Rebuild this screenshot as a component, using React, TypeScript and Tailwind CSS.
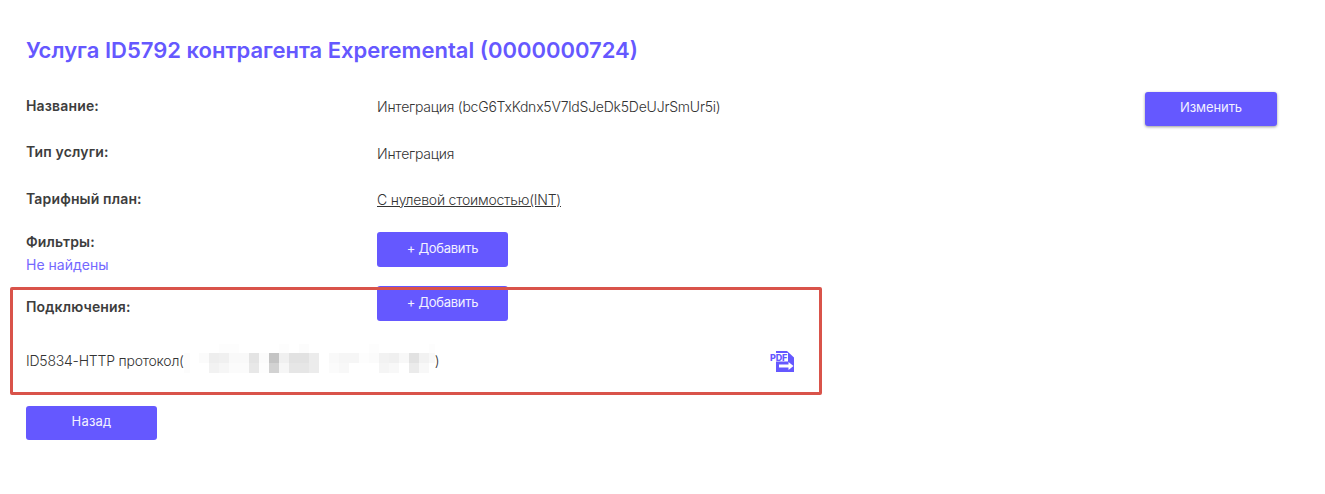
const font = "[font-family:Inter,'Noto_Sans',sans-serif]";

// blurred-out mosaic over the connection address, one row of 10px cells per line
const mosaic = [
  { y: 1, cells: ["#fff", "#fff", "#fdfdfd", "#fdfdfd", "#fff", "#fff", "#fff", "#fff", "#fdfdfd", "#fff", "#fcfcfc", "#fff", "#fff", "#fff", "#fff", "#fff", "#fff", "#fdfdfd", "#fff", "#fff", "#fff", "#fff", "#fff", "#fdfdfd"] },
  { y: 10, cells: ["#fbfbfb", "#eeeeee", "#f0f0f0", "#f9f9f9", "#f9f9f9", "#e4e4e4", "#fbfbfb", "#c4c4c4", "#f0f0f0", "#e2e2e2", "#e2e2e2", "#ececec", "#fff", "#f9f9f9", "#f6f6f6", "#f6f6f6", "#fdfdfd", "#fbfbfb", "#f2f2f2", "#f0f0f0", "#f8f8f8", "#e2e2e2", "#f2f2f2", "#f8f8f8"] },
  { y: 20, cells: ["#fff", "#f2f2f2", "#f6f6f6", "#fbfbfb", "#fbfbfb", "#e8e8e8", "#fdfdfd", "#d2d2d2", "#f6f6f6", "#e6e6e6", "#e6e6e6", "#ececec", "#fff", "#fbfbfb", "#f8f8f8", "#fff", "#fff", "#fff", "#f5f5f5", "#f8f8f8", "#fff", "#ebebeb", "#f8f8f8", "#fff"] },
];

function Blur() {
  return (
    <svg width="251" height="36" viewBox="0 0 251 36" className="shrink-0 -my-[8px]">
      <rect x="0" y="10" width="6" height="20" fill="#fcfcfc" />
      {mosaic.map((row) =>
        row.cells.map((c, i) => (
          <rect key={`${row.y}-${i}`} x={15 + i * 10} y={row.y} width="10" height="10" fill={c} />
        ))
      )}
    </svg>
  );
}

function PdfIcon() {
  return (
    <svg width="25" height="21" viewBox="0 0 25 21" className="shrink-0">
      <path d="M6 0h11l7 6.5V21H6z" fill="#6558ff" />
      <rect x="0" y="2" width="18" height="8.5" fill="#fff" />
      <text x="0" y="9.5" fontSize="9" fontWeight="800" letterSpacing="-0.2" fontFamily="Inter, sans-serif" fill="#6558ff">
        PDF
      </text>
      <path d="M9 13.5h9.5V11l5 4-5 4v-2.5H9z" fill="#fff" />
    </svg>
  );
}

function Button({ children, className = "" }: { children: React.ReactNode; className?: string }) {
  return (
    <button className={`w-[131px] h-[34px] pb-[2px] rounded-[3px] bg-[#6558ff] text-[#f2f1ff] text-[13px] font-normal ${className}`}>
      {children}
    </button>
  );
}

const labelCls = "w-[351px] shrink-0 text-[14px] leading-[20px] tracking-[0.15px] font-semibold text-[#3d3d3d]";
const valueCls = "text-[14px] leading-[20px] tracking-[-0.22px] font-light text-[#333333]";

export default function App() {
  return (
    <div className={`relative min-h-[494px] bg-white pt-[32px] pl-[26px] pr-[48px] ${font}`}>
      <h1 className="h-[36px] mb-[28px] text-[22px] leading-[36px] font-semibold text-[#6558ff]">
        Услуга ID5792 контрагента Experemental (0000000724)
      </h1>

      <div className="flex h-[46px]">
        <div className={labelCls}>Название:</div>
        <div className={`${valueCls} mt-[1px] flex-1`}>Интеграция (bcG6TxKdnx5V7ldSJeDk5DeUJrSmUr5i)</div>
        <Button className="-mt-[4px] w-[132px] tracking-[-0.1px] shadow-[0_1px_3px_rgba(0,0,0,0.4)]">Изменить</Button>
      </div>

      <div className="flex h-[47px]">
        <div className={labelCls}>Тип услуги:</div>
        <div className={`${valueCls} mt-[2px]`}>Интеграция</div>
      </div>

      <div className="flex h-[43px]">
        <div className={labelCls}>Тарифный план:</div>
        <div className={`${valueCls} mt-[1px] underline`}>С нулевой стоимостью(INT)</div>
      </div>

      <div className="flex h-[54px]">
        <div className={labelCls}>
          <div>Фильтры:</div>
          <div className="mt-[3px] font-normal tracking-normal text-[#7468ff]">Не найдены</div>
        </div>
        <Button className="h-[35px] tracking-[-0.3px]">+ Добавить</Button>
      </div>

      <div className="flex h-[65px]">
        <div className={`${labelCls} pt-[11px]`}>Подключения:</div>
        <Button className="h-[35px] tracking-[-0.3px]">+ Добавить</Button>
      </div>

      <div className="flex items-center justify-between w-[769px] h-[20px] mb-[35px]">
        <div className={`${valueCls} flex items-center`}>
          <span>ID5834-HTTP протокол(</span>
          <Blur />
          <span>)</span>
        </div>
        <PdfIcon />
      </div>

      <Button className="tracking-[0.2px]">Назад</Button>

      {/* annotation frame drawn over the connections block */}
      <div className="absolute left-[10px] top-[287px] w-[812px] h-[108px] border-[3px] border-[#d9534a] rounded-[2px] pointer-events-none" />
    </div>
  );
}
